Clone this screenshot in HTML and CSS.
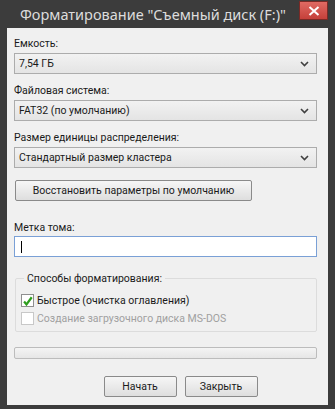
FILE: index.html
```html
<!DOCTYPE html>
<html lang="ru">
<head>
    <meta charset="UTF-8">
    <meta name="viewport" content="width=device-width, initial-scale=1.0">
    <link rel="stylesheet" href="styles.css">
</head>
<body>
    <div class="window">
        <div class="titlebar">
            <span class="title">Форматирование "Съемный диск (F:)"</span>
            <span class="close">
                <svg width="12" height="10" viewBox="0 0 12 10"><path d="M1.5 1 L10.5 9 M10.5 1 L1.5 9" stroke="#fff" stroke-width="2"/></svg>
            </span>
        </div>
        <div class="client">
            <div class="label first">Емкость:</div>
            <div class="select">
                <span>7,54 ГБ</span>
                <svg class="arrow" width="9" height="6" viewBox="0 0 9 6"><path d="M1 1 L4.5 4.5 L8 1" stroke="#404040" stroke-width="1.6" fill="none"/></svg>
            </div>

            <div class="label">Файловая система:</div>
            <div class="select">
                <span>FAT32 (по умолчанию)</span>
                <svg class="arrow" width="9" height="6" viewBox="0 0 9 6"><path d="M1 1 L4.5 4.5 L8 1" stroke="#404040" stroke-width="1.6" fill="none"/></svg>
            </div>

            <div class="label">Размер единицы распределения:</div>
            <div class="select">
                <span>Стандартный размер кластера</span>
                <svg class="arrow" width="9" height="6" viewBox="0 0 9 6"><path d="M1 1 L4.5 4.5 L8 1" stroke="#404040" stroke-width="1.6" fill="none"/></svg>
            </div>

            <button class="btn restore" type="button">Восстановить параметры по умолчанию</button>

            <div class="label volume">Метка тома:</div>
            <div class="textbox"><span class="caret"></span></div>

            <fieldset class="group">
                <legend>Способы форматирования:</legend>
                <div class="check">
                    <span class="box">
                        <svg width="13" height="13" viewBox="0 0 13 13"><path d="M2.5 6.5 L5.3 10 L11.5 1.5" stroke="#2e9e1e" stroke-width="2.6" fill="none"/></svg>
                    </span>
                    <span>Быстрое (очистка оглавления)</span>
                </div>
                <div class="check disabled">
                    <span class="box"></span>
                    <span>Создание загрузочного диска MS-DOS</span>
                </div>
            </fieldset>

            <div class="progress"></div>

            <div class="actions">
                <button class="btn" type="button">Начать</button>
                <button class="btn" type="button">Закрыть</button>
            </div>
        </div>
    </div>
</body>
</html>
```

FILE: styles.css
```css
html, body {
    margin: 0;
    padding: 0;
    background-color: #3c3c3c;
}
.window {
    width: 335px;
    height: 409px;
    box-sizing: border-box;
    padding: 0 7px 4px 7px;
    display: flex;
    flex-direction: column;
    background-color: #3c3c3c;
    font-family: Roboto, "Noto Sans", sans-serif;
}
.titlebar {
    height: 28px;
    flex: none;
    display: flex;
    align-items: flex-start;
}
.title {
    margin-top: 5px;
    margin-left: 13px;
    font-family: "Noto Sans", sans-serif;
    font-size: 14.5px;
    line-height: 18px;
    color: #dcdcdc;
    white-space: nowrap;
}
.close {
    margin-left: auto;
    margin-top: 1px;
    width: 29px;
    height: 19px;
    display: flex;
    align-items: center;
    justify-content: center;
    background: linear-gradient(#e06a63, #c5403a);
    border: 1px solid #7a2a26;
    box-sizing: border-box;
}
.client {
    flex: 1;
    background-color: #f0f0f0;
    padding: 0 11px 0 7px;
    display: flex;
    flex-direction: column;
    font-size: 10.5px;
    color: #1a1a1a;
    white-space: nowrap;
}
.label {
    height: 15px;
    line-height: 15px;
    margin-top: 9px;
    flex: none;
}
.label.first {
    margin-top: 8px;
}
.label.volume {
    margin-top: 19px;
}
.select {
    margin-top: 2px;
    height: 21px;
    flex: none;
    box-sizing: border-box;
    border: 1px solid #acacac;
    background: linear-gradient(#f2f2f2, #e4e4e4);
    display: flex;
    align-items: center;
    padding: 0 7px 0 4px;
}
.select .arrow {
    margin-left: auto;
}
.btn {
    font-family: inherit;
    font-size: 10.5px;
    color: #1a1a1a;
    height: 21px;
    padding: 0;
    border: 1px solid #8a8a8a;
    border-radius: 2px;
    background: linear-gradient(#f6f6f6, #dedede);
    white-space: nowrap;
}
.restore {
    flex: none;
    margin-top: 12px;
    margin-left: 1px;
    width: 237px;
}
.textbox {
    flex: none;
    margin-top: 1px;
    height: 21px;
    box-sizing: border-box;
    border: 1px solid #7aa0d6;
    background-color: #ffffff;
    display: flex;
    align-items: center;
    padding-left: 6px;
}
.caret {
    width: 1px;
    height: 12px;
    background-color: #000;
}
.group {
    flex: none;
    margin: 14px 0 0 1px;
    padding: 5px 0 0 5px;
    border: 1px solid #dcdcdc;
    border-radius: 2px;
    height: 61px;
    box-sizing: border-box;
}
.group legend {
    padding: 0 3px;
    margin-left: 3px;
    line-height: 15px;
}
.check {
    display: flex;
    align-items: center;
    gap: 3px;
    height: 17px;
    margin-top: 1px;
}
.box {
    width: 13px;
    height: 13px;
    box-sizing: border-box;
    border: 1px solid #8f8f8f;
    background-color: #fff;
    display: flex;
    overflow: visible;
}
.check.disabled {
    color: #a0a0a0;
}
.check.disabled .box {
    border-color: #c8c8c8;
}
.progress {
    flex: none;
    margin-top: 15px;
    height: 12px;
    box-sizing: border-box;
    border: 1px solid #bcbcbc;
    border-radius: 2px;
    background: linear-gradient(#f4f4f4, #e6e6e6);
}
.actions {
    flex: none;
    margin-top: 17px;
    display: flex;
    justify-content: center;
    gap: 8px;
    padding-left: 30px;
}
.actions .btn {
    width: 73px;
    height: 21px;
}
```
